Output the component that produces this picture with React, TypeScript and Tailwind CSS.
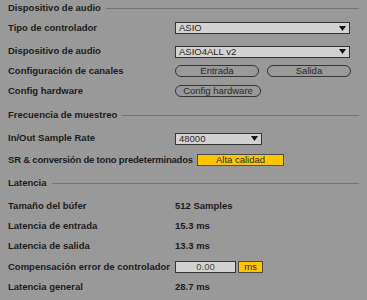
import React from 'react';

const font = { fontFamily: '"Liberation Sans", Arial, sans-serif' };

const Header: React.FC<{ title: string; h: string }> = ({ title, h }) => (
  <div className={`flex items-center pl-2 pr-2 ${h}`}>
    <span className="font-bold text-[9.5px] text-[#1c1c1c] whitespace-nowrap">{title}</span>
    <div className="flex-1 h-px bg-[#767676] ml-[5px]" />
  </div>
);

const Row: React.FC<{ label: string; h: string; children?: React.ReactNode }> = ({ label, h, children }) => (
  <div className={`flex items-center pl-2 ${h}`}>
    <span className="w-[167px] shrink-0 font-bold text-[9.5px] text-[#1c1c1c] whitespace-nowrap">{label}</span>
    {children}
  </div>
);

const Select: React.FC<{ value: string; w: string }> = ({ value, w }) => (
  <div className={`${w} h-[12px] flex items-center justify-between bg-[#d2d2d2] border border-[#363636] pl-[3px] pr-[3px]`}>
    <span className="text-[9.5px] text-[#2a2a2a] leading-none">{value}</span>
    <svg width="7" height="5" viewBox="0 0 7 5">
      <path d="M0 0 L7 0 L3.5 5 Z" fill="#111" />
    </svg>
  </div>
);

const Pill: React.FC<{ label: string; w: string }> = ({ label, w }) => (
  <div className={`${w} h-[12px] flex items-center justify-center rounded-full border border-[#363636] text-[9.5px] text-[#2a2a2a] leading-none`}>
    {label}
  </div>
);

const Value: React.FC<{ v: string }> = ({ v }) => (
  <span className="font-bold text-[9.5px] text-[#1c1c1c]">{v}</span>
);

export default function App() {
  return (
    <div className="w-[367px] h-[300px] bg-[#999999] flex flex-col" style={font}>
      <Header title="Dispositivo de audio" h="h-[16px]" />
      <Row label="Tipo de controlador" h="h-[24px]">
        <Select value="ASIO" w="w-[175px]" />
      </Row>
      <Row label="Dispositivo de audio" h="h-[23px]">
        <Select value="ASIO4ALL v2" w="w-[175px]" />
      </Row>
      <Row label="Configuración de canales" h="h-[16px]">
        <div className="flex gap-[8px]">
          <Pill label="Entrada" w="w-[84px]" />
          <Pill label="Salida" w="w-[84px]" />
        </div>
      </Row>
      <Row label="Config hardware" h="h-[24px]">
        <Pill label="Config hardware" w="w-[86px]" />
      </Row>
      <Header title="Frecuencia de muestreo" h="h-[24px]" />
      <Row label="In/Out Sample Rate" h="h-[23px]">
        <Select value="48000" w="w-[87px]" />
      </Row>
      <div className="flex items-center pl-2 h-[20px]">
        <span className="w-[189px] shrink-0 font-bold text-[9.5px] tracking-[-0.2px] text-[#1c1c1c] whitespace-nowrap">
          SR &amp; conversión de tono predeterminados
        </span>
        <div className="w-[87px] h-[12px] flex items-center justify-center bg-[#ffc600] border border-[#4a4a4a] text-[9.5px] text-[#2a2a2a] leading-none">
          Alta calidad
        </div>
      </div>
      <Header title="Latencia" h="h-[26px]" />
      <Row label="Tamaño del búfer" h="h-[20px]">
        <Value v="512 Samples" />
      </Row>
      <Row label="Latencia de entrada" h="h-[20px]">
        <Value v="15.3 ms" />
      </Row>
      <Row label="Latencia de salida" h="h-[20px]">
        <Value v="13.3 ms" />
      </Row>
      <Row label="Compensación error de controlador" h="h-[22px]">
        <div className="flex items-center gap-[2px]">
          <div className="w-[61px] h-[12px] flex items-center justify-center bg-[#d2d2d2] border border-[#363636] text-[9.5px] text-[#4a4a4a] leading-none">
            0.00
          </div>
          <div className="w-[25px] h-[12px] flex items-center justify-center bg-[#ffc600] border border-[#4a4a4a] text-[9.5px] text-[#2a2a2a] leading-none">
            ms
          </div>
        </div>
      </Row>
      <Row label="Latencia general" h="h-[18px]">
        <Value v="28.7 ms" />
      </Row>
    </div>
  );
}
